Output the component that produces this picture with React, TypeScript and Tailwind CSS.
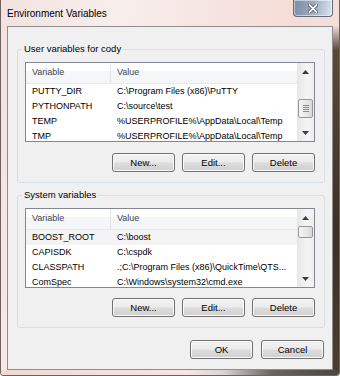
import React from 'react';

const userVars = [
  ['PUTTY_DIR', 'C:\\Program Files (x86)\\PuTTY'],
  ['PYTHONPATH', 'C:\\source\\test'],
  ['TEMP', '%USERPROFILE%\\AppData\\Local\\Temp'],
  ['TMP', '%USERPROFILE%\\AppData\\Local\\Temp'],
];

const sysVars = [
  ['BOOST_ROOT', 'C:\\boost'],
  ['CAPISDK', 'C:\\cspdk'],
  ['CLASSPATH', '.;C:\\Program Files (x86)\\QuickTime\\QTS...'],
  ['ComSpec', 'C:\\Windows\\system32\\cmd.exe'],
];

const Arrow = ({ down }: { down?: boolean }) => (
  <svg width="7" height="4" viewBox="0 0 7 4">
    <path d={down ? 'M0 0 H7 L3.5 4 Z' : 'M0 4 H7 L3.5 0 Z'} fill="#3d3d3d" />
  </svg>
);

const WinButton = ({ label }: { label: string }) => (
  <button className="h-[19px] w-[63px] rounded-[3px] border border-[#707070] bg-[linear-gradient(to_bottom,#f2f2f2_0%,#ebebeb_48%,#dddddd_52%,#cfcfcf_100%)] text-[9.5px] leading-none text-black shadow-[inset_0_0_0_1px_#fbfbfb]">
    {label}
  </button>
);

const Scrollbar = ({ thumb, grip }: { thumb: string; grip?: boolean }) => (
  <div className="flex w-[17px] shrink-0 flex-col bg-[linear-gradient(to_right,#e6e6e6,#f5f5f5_60%,#efefef)]">
    <div className="flex h-[17px] shrink-0 items-center justify-center">
      <Arrow />
    </div>
    <div
      className={`mx-[1px] flex shrink-0 flex-col items-center justify-center gap-[1px] rounded-[2px] border border-[#979797] bg-[linear-gradient(to_right,#f4f4f4,#e9e9e9_50%,#d8d8d8)] ${thumb}`}
    >
      {grip && (
        <>
          <div className="h-px w-[6px] bg-[#8c8c8c]" />
          <div className="h-px w-[6px] bg-[#8c8c8c]" />
          <div className="h-px w-[6px] bg-[#8c8c8c]" />
          <div className="h-px w-[6px] bg-[#8c8c8c]" />
        </>
      )}
    </div>
    <div className="flex-1" />
    <div className="flex h-[17px] shrink-0 items-center justify-center">
      <Arrow down />
    </div>
  </div>
);

const VarList = ({
  rows,
  thumb,
  grip,
  hot,
}: {
  rows: string[][];
  thumb: string;
  grip?: boolean;
  hot?: boolean;
}) => (
  <div className="ml-[3px] flex h-[80px] w-[290px] overflow-hidden border border-[#828790] bg-white">
    <div className="flex min-w-0 flex-1 flex-col">
      <div className="flex h-[21px] shrink-0 border-b border-[#e6e9ee] bg-[linear-gradient(to_bottom,#ffffff_0%,#ffffff_40%,#f5f6f8_40%,#f5f6f8_100%)] text-[#3e4753]">
        <div className="flex w-[85px] items-center border-r border-[#e2e5ea] pl-[6px]">Variable</div>
        <div className="flex flex-1 items-center pl-[6px]">Value</div>
      </div>
      {rows.map(([name, value], i) => (
        <div
          key={name}
          className={`flex h-[15px] shrink-0 items-center whitespace-nowrap text-black ${
            hot && i === 0 ? 'bg-[#f3f3f3]' : ''
          }`}
        >
          <div className="w-[85px] shrink-0 pl-[6px]">{name}</div>
          <div className="min-w-0 overflow-hidden pl-[6px]">{value}</div>
        </div>
      ))}
    </div>
    <Scrollbar thumb={thumb} grip={grip} />
  </div>
);

const Group = ({ title, children }: { title: string; children: React.ReactNode }) => (
  <fieldset className="rounded-[3px] border border-[#d5dfe5] pb-[10px] pl-[4px]">
    <legend className="px-[2px] text-[9.5px] leading-[14px] text-black">{title}</legend>
    <div className="pt-[6px]">{children}</div>
  </fieldset>
);

const ButtonRow = ({ top }: { top: string }) => (
  <div className={`flex w-[293px] justify-end gap-[7px] ${top}`}>
    <WinButton label="New..." />
    <WinButton label="Edit..." />
    <WinButton label="Delete" />
  </div>
);

export default function App() {
  return (
    <div className="flex h-[376px] w-[340px] flex-col overflow-hidden rounded-b-[4px] border-x border-b border-[#6f625e] bg-[linear-gradient(100deg,#f3e2df_0%,#f8eeec_30%,#f5e3df_55%,#f7dcd6_75%,#efe3e0_100%)] font-['Segoe_UI','Liberation_Sans',sans-serif] text-[9px]">
      <div className="relative flex h-[26px] shrink-0 items-center pl-[6px] text-[10px] text-black">
        Environment Variables
        <div className="absolute right-[6px] top-0 flex h-[17px] w-[40px] items-center justify-center rounded-b-[4px] border border-t-0 border-[#5f6c80] bg-[linear-gradient(100deg,#7d8ca5_0%,#98a7bd_45%,#c4cfdc_80%,#e1e6ec_100%)] shadow-[inset_0_0_0_1px_rgba(255,255,255,0.5)]">
          <svg width="10" height="9" viewBox="0 0 10 9">
            <path d="M1.5 1 L8.5 8 M8.5 1 L1.5 8" stroke="#3b4557" strokeWidth="3.4" strokeLinecap="round" />
            <path d="M1.5 1 L8.5 8 M8.5 1 L1.5 8" stroke="#ffffff" strokeWidth="1.8" strokeLinecap="round" />
          </svg>
        </div>
      </div>
      <div className="flex min-h-0 flex-1">
        <div className="w-[6px] shrink-0" />
        <div className="flex h-[344px] w-[326px] shrink-0 flex-col border border-[#8e8e8e] bg-[#f0f0f0] pl-[9px] pr-[7px] pt-[15px]">
          <Group title="User variables for cody">
            <VarList rows={userVars} thumb="mt-[19px] h-[19px]" grip />
            <ButtonRow top="mt-[11px]" />
          </Group>
          <div className="h-[5px]" />
          <Group title="System variables">
            <VarList rows={sysVars} thumb="mt-0 h-[12px]" hot />
            <ButtonRow top="mt-[10px]" />
          </Group>
          <div className="mt-[12px] flex justify-end gap-[8px] pr-[1px]">
            <WinButton label="OK" />
            <WinButton label="Cancel" />
          </div>
        </div>
        <div className="flex-1 bg-[linear-gradient(to_bottom,#eddcd8_0px,#5a4a35_24px,#3b3022_60%,#4b3e2b_100%)]" />
      </div>
      <div className="h-[5px] shrink-0 bg-[linear-gradient(to_right,#f2d8d3_0%,#f6e6e3_55%,#d9d4d2_66%,#6a6460_80%,#4a4540_100%)]" />
    </div>
  );
}
